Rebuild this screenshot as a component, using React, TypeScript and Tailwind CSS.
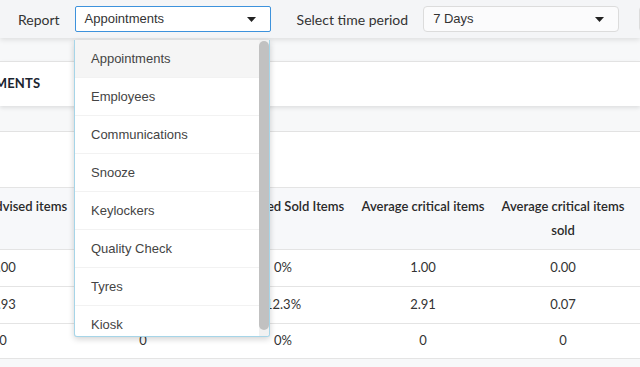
import React from "react";

const Caret = () => (
  <svg width="9" height="5" viewBox="0 0 9 5" className="shrink-0">
    <path d="M0 0 L9 0 L4.5 5 Z" fill="#222" />
  </svg>
);

const items = [
  "Appointments",
  "Employees",
  "Communications",
  "Snooze",
  "Keylockers",
  "Quality Check",
  "Tyres",
  "Kiosk",
];

const headers = [
  "Average advised items",
  "Advised items sold",
  "% Advised Sold Items",
  "Average critical items",
  "Average critical items sold",
  "Average critical items sold %",
];

const rows = [
  ["1.00", "0", "0%", "1.00", "0.00", "0%"],
  ["2.93", "0", "12.3%", "2.91", "0.07", "2%"],
  ["0", "0", "0%", "0", "0", "0%"],
];

export default function App() {
  return (
    <div
      className="relative w-[640px] h-[367px] overflow-hidden bg-[#f7f8f9]"
      style={{ fontFamily: "Lato, 'Liberation Sans', sans-serif" }}
    >
      {/* top bar */}
      <div className="relative z-10 flex h-[38px] items-center whitespace-nowrap bg-[#f4f5f7] shadow-[0_2px_5px_rgba(0,0,0,0.10)]">
        <span className="ml-[18px] shrink-0 text-[14px] text-[#333]">Report</span>
        <div
          className="ml-[15px] flex h-[26px] w-[196px] shrink-0 items-center justify-between rounded-[2px] border border-[#3d92dc] bg-white pl-[9px] pr-[14px] text-[13px] text-[#333]"
          style={{ fontFamily: "'Liberation Sans', Arial, sans-serif" }}
        >
          <span>Appointments</span>
          <Caret />
        </div>
        <span className="ml-[26px] shrink-0 text-[14px] text-[#333]">Select time period</span>
        <div
          className="ml-[15px] flex h-[26px] w-[196px] shrink-0 items-center justify-between rounded-[4px] border border-[#dcdcdc] bg-[#fbfbfc] pl-[9px] pr-[14px] text-[13px] text-[#333]"
          style={{ fontFamily: "'Liberation Sans', Arial, sans-serif" }}
        >
          <span>7 Days</span>
          <Caret />
        </div>
        <div className="ml-[20px] h-[26px] w-[40px] shrink-0 rounded-[4px] border border-[#dcdcdc] bg-[#fbfbfc]" />
      </div>

      {/* card header */}
      <div className="mt-[23px] flex h-[45px] items-center border-t border-[#e2e2e2] bg-white shadow-[0_2px_4px_rgba(0,0,0,0.10)]">
        <span className="ml-[-64px] shrink-0 whitespace-nowrap text-[13px] font-bold tracking-[0.2px] text-[#1b2530]">
          APPOINTMENTS
        </span>
      </div>

      {/* table section */}
      <div className="mt-[25px] border-t border-[#e2e2e2] bg-white pt-[55px]">
        <div className="ml-[-67px] w-[840px] text-[13px] text-[#333]">
          <div className="flex h-[63px] border-y border-[#e4e4e4] bg-[#f7f8fa] pt-[6px]">
            {headers.map((h) => (
              <div
                key={h}
                className="w-[140px] shrink-0 px-[4px] text-center font-semibold leading-[24px] text-[#2a2a2a]"
              >
                {h}
              </div>
            ))}
          </div>
          {rows.map((r, i) => (
            <div
              key={i}
              className={`flex items-center border-b border-[#e4e4e4] ${i === 2 ? "h-[35px]" : "h-[37px]"}`}
            >
              {r.map((v, j) => (
                <div key={j} className="w-[140px] shrink-0 text-center">
                  {v}
                </div>
              ))}
            </div>
          ))}
        </div>
      </div>

      {/* dropdown */}
      <div
        className="absolute left-[74px] top-[40px] z-20 flex h-[297px] w-[196px] overflow-hidden rounded-b-[3px] border border-t-0 border-[#a6d5e8] bg-white shadow-[0_2px_6px_rgba(0,0,0,0.18)]"
        style={{ fontFamily: "'Liberation Sans', Arial, sans-serif" }}
      >
        <div className="flex-1 overflow-hidden">
          {items.map((it, i) => (
            <div
              key={it}
              className={`flex h-[38px] items-center border-b border-[#f2f2f2] pl-[16px] text-[13px] text-[#444] ${i === 0 ? "bg-[#f5f5f5]" : ""}`}
            >
              {it}
            </div>
          ))}
        </div>
        <div className="flex w-[10px] flex-col bg-[#f1f1f1] pt-[1px] pb-[6px]">
          <div className="flex-1 rounded-[5px] bg-[#c1c1c1]" />
        </div>
      </div>
    </div>
  );
}
